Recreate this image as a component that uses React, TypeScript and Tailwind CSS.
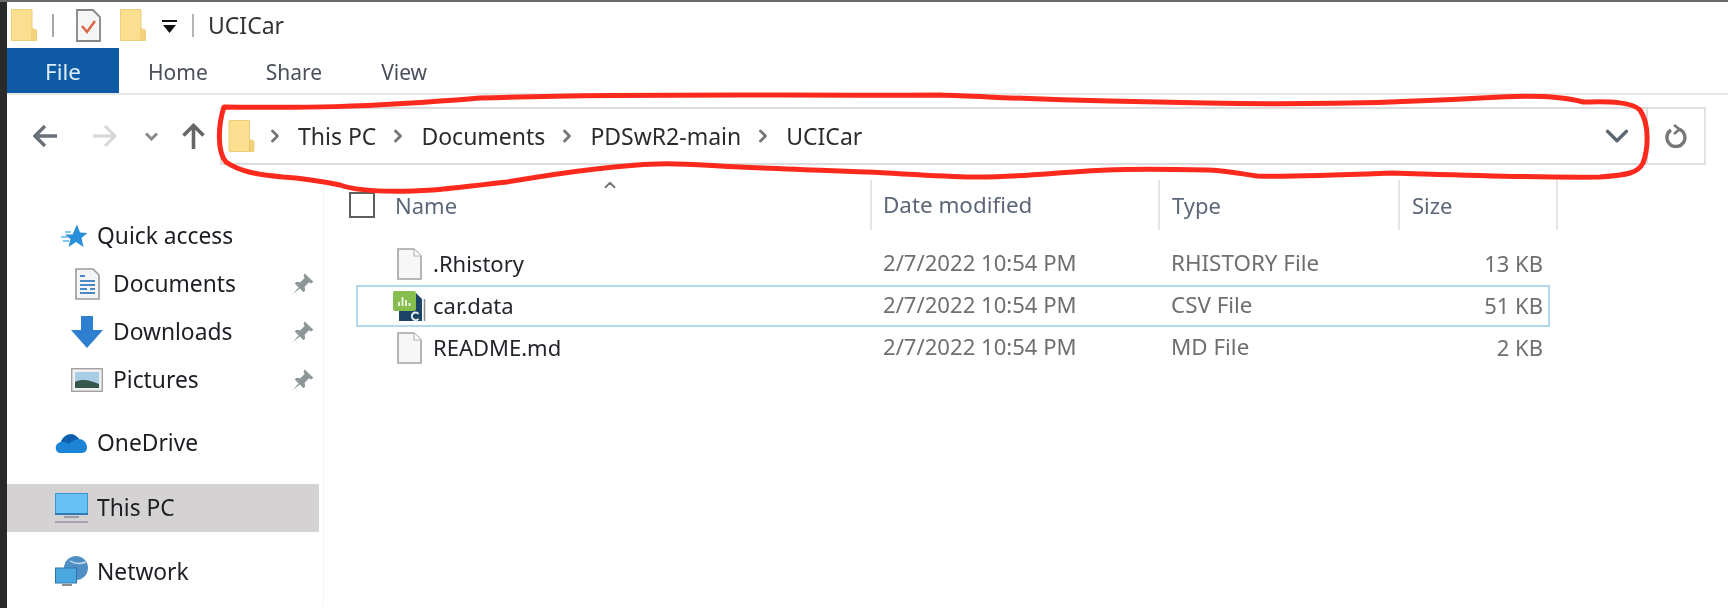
import { ChevronDown, ChevronRight, ChevronUp } from "lucide-react";

const font = "font-['Noto_Sans','Open_Sans',sans-serif]";

function Folder({ className }: { className: string }) {
  return (
    <svg className={className} viewBox="0 0 26 32" fill="none">
      <path d="M0.5 0.5H21V19.5L25.5 21V31.5H0.5Z" fill="#fbdf90" stroke="#ecce78" />
      <path d="M21 19.5V31.5" stroke="#e8c566" strokeWidth="1" />
      <path d="M21.5 20.5L25 22V31H21.5Z" fill="#f4d27a" />
    </svg>
  );
}

function FileIcon() {
  return (
    <svg className="h-[32px] w-[25px] shrink-0" viewBox="0 0 25 32" fill="none">
      <path d="M1 1H17L24 8V31H1Z" fill="#f7f7f7" stroke="#a3a3a3" strokeWidth="1.6" />
      <path d="M17 1V8H24" fill="#fff" stroke="#b5b5b5" strokeWidth="1.2" />
    </svg>
  );
}

function CsvIcon() {
  return (
    <svg className="h-[31px] w-[33px] shrink-0" viewBox="0 0 33 31" fill="none">
      <path d="M31.5 8V30" stroke="#8a8f94" strokeWidth="1.6" />
      <path d="M6 2H23L29 8V30H6Z" fill="#1c4466" />
      <rect x="0" y="0" width="23" height="20" rx="2" fill="#86bd4f" />
      <path d="M6 15V11M9.5 15V6M13 15V9M16.5 15V12" stroke="#e8f3da" strokeWidth="2" />
      <path d="M25.5 22.8A3.8 3.8 0 1 0 25.5 27.8" stroke="#e8eef3" strokeWidth="1.9" />
    </svg>
  );
}

function Pin() {
  return (
    <svg className="h-[22px] w-[22px]" viewBox="0 0 20 20" fill="#8e9698">
      <path d="M11.5 0.5L19.5 8L17.5 9.5L15.5 8.5L11.5 12.5L12 16L10.5 17.5L2.5 9.5L4 8L7.5 8.5L11.5 4.5L10.5 2.5Z" />
      <path d="M6 13L0.5 19.5L7 14.2Z" />
    </svg>
  );
}

function NavRow({ icon, label, pinned, active, indent }: { icon: React.ReactNode; label: string; pinned?: boolean; active?: boolean; indent?: boolean }) {
  return (
    <div className={`flex h-[48px] w-[312px] items-center ${active ? "bg-[#d4d2d3]" : ""} ${indent ? "pl-[64px]" : "pl-[48px]"}`}>
      <div className="flex h-[34px] w-[42px] items-center">{icon}</div>
      <span className="text-[22.8px] leading-none text-[#1d1d24]">{label}</span>
      {pinned && (
        <span className="ml-auto mr-[5px]">
          <Pin />
        </span>
      )}
    </div>
  );
}

const crumbs = ["This PC", "Documents", "PDSwR2-main", "UCICar"];

const files = [
  { name: ".Rhistory", type: "RHISTORY File", size: "13 KB" },
  { name: "car.data", type: "CSV File", size: "51 KB", selected: true },
  { name: "README.md", type: "MD File", size: "2 KB" },
];

export default function App() {
  return (
    <div className={`relative flex h-[608px] w-[1728px] flex-col overflow-hidden bg-white ${font}`}>
      <div className="h-[2px] shrink-0 bg-[#6a6a6a]" />
      <div className="flex min-h-0 flex-1">
        <div className="w-[7px] shrink-0 bg-[#2a2a2a]" />
        <div className="min-w-0 flex-1 blur-[0.5px]">
          {/* Title bar */}
          <div className="flex h-[46px] items-center">
            <Folder className="ml-[4px] h-[32px] w-[26px]" />
            <div className="ml-[15px] h-[23px] w-[2px] bg-[#a8a8a8]" />
            <svg className="ml-[22px] h-[33px] w-[25px]" viewBox="0 0 25 33" fill="none">
              <path d="M1 1H17L24 8V32H1Z" fill="#f6f6f6" stroke="#858585" strokeWidth="1.8" />
              <path d="M6 17L11 23L19 12" stroke="#d9694a" strokeWidth="2.6" />
            </svg>
            <Folder className="ml-[19px] h-[32px] w-[26px]" />
            <svg className="ml-[16px] mt-[4px] h-[14px] w-[15px]" viewBox="0 0 15 14" fill="#111">
              <rect x="0" y="0" width="15" height="2" />
              <path d="M1 5H14L7.5 13Z" />
            </svg>
            <div className="ml-[15px] h-[23px] w-[2px] bg-[#b5b5b5]" />
            <span className="ml-[14px] text-[23px] leading-none text-[#333]">UCICar</span>
          </div>

          {/* Ribbon tabs */}
          <div className="flex h-[47px] items-stretch border-b-2 border-[#e6e6e9]">
            <div className="flex w-[112px] items-center justify-center bg-[#0f5aa5] pt-[2px] text-[22.5px] text-[#dcecf8]">File</div>
            <div className="ml-[29px] flex items-center pt-[4px] text-[21px] text-[#4a4f5c]">Home</div>
            <div className="ml-[58px] flex items-center pt-[4px] text-[21px] text-[#4a4f5c]">Share</div>
            <div className="ml-[59px] flex items-center pt-[4px] text-[21px] text-[#4a4f5c]">View</div>
          </div>

          {/* Address row */}
          <div className="flex h-[85px] pt-[12px]">
            <div className="flex h-[58px] w-[213px] items-center pl-[26px]">
              <svg className="h-[24px] w-[24px]" viewBox="0 0 24 24" fill="none" stroke="#6b7178" strokeWidth="3.4">
                <path d="M24 12H2M12 2L2 12L12 22" />
              </svg>
              <svg className="ml-[36px] h-[24px] w-[24px]" viewBox="0 0 24 24" fill="none" stroke="#d6d6d6" strokeWidth="3">
                <path d="M0 12H22M12 2L22 12L12 22" />
              </svg>
              <svg className="ml-[28px] h-[9px] w-[13px]" viewBox="0 0 13 9" fill="none" stroke="#8b8b8b" strokeWidth="3">
                <path d="M1 1.5L6.5 7L12 1.5" />
              </svg>
              <svg className="ml-[24px] h-[26px] w-[23px]" viewBox="0 0 23 26" fill="none" stroke="#666" strokeWidth="3.6">
                <path d="M11.5 26V3M1.5 12.5L11.5 2.5L21.5 12.5" />
              </svg>
            </div>
            <div className="flex h-[58px] w-[1428px] items-center border-2 border-[#dcdcdc] pl-[6px] pr-[6px]">
              <Folder className="h-[32px] w-[27px]" />
              {crumbs.map((c, i) => (
                <div key={c} className="flex items-center">
                  <ChevronRight className={`${i === 0 ? "ml-[10px]" : "ml-[12px]"} h-[20px] w-[20px] text-[#777]`} strokeWidth={3.4} />
                  <span className="ml-[13px] text-[23px] leading-none text-[#2c2c30]">{c}</span>
                </div>
              ))}
              <ChevronDown className="ml-auto mr-[4px] h-[38px] w-[38px] text-[#5c6670]" strokeWidth={2.1} />
            </div>
            <div className="flex h-[58px] w-[58px] items-center justify-center border-y-2 border-r-2 border-[#e2e2e2]">
              <svg className="h-[24px] w-[22px]" viewBox="0 0 22 24" fill="none" stroke="#777" strokeWidth="3.4">
                <path d="M14.5 5.3A9 9 0 1 1 6 6" />
                <path d="M9 1L14.5 5.3L9 10" strokeWidth="2.6" />
              </svg>
            </div>
          </div>

          <div className="flex">
            {/* Navigation pane */}
            <div className="h-[426px] w-[317px] shrink-0 border-r border-[#f3f3f3] pt-[32px]">
              <NavRow
                label="Quick access"
                icon={
                  <svg className="ml-[5px] h-[24px] w-[28px]" viewBox="0 0 28 24" fill="#2a8fd8">
                    <path d="M17 0.5L20 8.5L27.5 9L21.5 14L23.5 23L16 18L8.5 23L10.5 15L5 10.5H12.5Z" />
                    <path d="M1 13H8M3 17H9M5 8H11" stroke="#5db4ec" strokeWidth="1.4" />
                  </svg>
                }
              />
              <NavRow
                indent
                pinned
                label="Documents"
                icon={
                  <svg className="ml-[4px] h-[32px] w-[25px]" viewBox="0 0 25 32" fill="none">
                    <path d="M1 1H18L24 7V31H1Z" fill="#f3f5f8" stroke="#9a9a9a" strokeWidth="1.6" />
                    <path d="M5 8H10M5 13H20M5 17H20M5 21H12M15 21H20M5 25H20" stroke="#4d8ac4" strokeWidth="1.8" />
                  </svg>
                }
              />
              <NavRow
                indent
                pinned
                label="Downloads"
                icon={
                  <svg className="h-[32px] w-[32px]" viewBox="0 0 32 32" fill="#2f7fd0">
                    <path d="M10 0H22V14H32L16 32L0 14H10Z" />
                  </svg>
                }
              />
              <NavRow
                indent
                pinned
                label="Pictures"
                icon={
                  <svg className="h-[24px] w-[32px]" viewBox="0 0 32 24" fill="none">
                    <rect x="0.7" y="0.7" width="30.6" height="22.6" fill="#f0f0f0" stroke="#a2a2a2" strokeWidth="1.4" />
                    <rect x="4" y="4" width="24" height="16" fill="#a9cde4" />
                    <path d="M4 14C12 10 20 13 28 16V20H4Z" fill="#36574c" />
                  </svg>
                }
              />
              <div className="mt-[15px]">
                <NavRow
                  label="OneDrive"
                  icon={
                    <svg className="h-[22px] w-[33px]" viewBox="0 0 33 22" fill="none">
                      <path d="M6 21C-1 21 -1 11 6 10C8 3 18 -2 24 7C33 7 35 21 27 21Z" fill="#1b84d6" />
                      <path d="M6 10C8 3 18 -2 24 7C19 7 16 10 14 12C11 10 8 10 6 10Z" fill="#0f5fae" />
                    </svg>
                  }
                />
              </div>
              <div className="mt-[17px]">
                <NavRow
                  active
                  label="This PC"
                  icon={
                    <svg className="h-[30px] w-[33px]" viewBox="0 0 33 30" fill="none">
                      <rect x="0.5" y="0.5" width="32" height="20" fill="#68c0f5" stroke="#3e96d0" />
                      <rect x="0" y="20" width="33" height="2" fill="#2f7bb5" />
                      <rect x="9" y="23" width="15" height="2" fill="#9a9fa6" />
                      <rect x="0" y="28" width="33" height="2" fill="#a8a4b4" />
                    </svg>
                  }
                />
              </div>
              <div className="mt-[16px]">
                <NavRow
                  label="Network"
                  icon={
                    <svg className="h-[32px] w-[33px]" viewBox="0 0 33 32" fill="none">
                      <circle cx="21" cy="12" r="12" fill="#4f8fc4" />
                      <path d="M15 5C20 8 26 8 31 6" stroke="#c5dcee" strokeWidth="1.4" />
                      <rect x="0.5" y="12" width="21" height="15" fill="#4aa8e0" stroke="#2e74a8" />
                      <rect x="7" y="28" width="10" height="2" fill="#8c8c8c" />
                    </svg>
                  }
                />
              </div>
            </div>

            {/* File list */}
            <div className="min-w-0 flex-1">
              <div className="flex h-[50px] items-stretch text-[22px] text-[#5b6778]">
                <div className="relative flex w-[546px] items-center pl-[25px]">
                  <div className="h-[26px] w-[26px] border-2 border-[#5e5e5e]" />
                  <span className="ml-[20px]">Name</span>
                  <ChevronUp className="absolute left-[276px] top-[-4px] h-[18px] w-[20px] text-[#777]" strokeWidth={2.5} />
                </div>
                <div className="flex w-[288px] items-center border-l-2 border-[#e5e5e8] pl-[11px]">
                  <span className="text-[22.4px]">Date modified</span>
                </div>
                <div className="flex w-[240px] items-center border-l-2 border-[#e5e5e8] pl-[12px]">
                  <span>Type</span>
                </div>
                <div className="flex w-[160px] items-center border-x-2 border-[#e5e5e8] pl-[12px]">
                  <span>Size</span>
                </div>
              </div>
              <div className="ml-[32px] mt-[13px] w-[1194px]">
                {files.map((f) => (
                  <div key={f.name} className={`flex h-[42px] items-center border-2 text-[22px] ${f.selected ? "border-[#b2d8ec]" : "border-transparent"}`}>
                    <div className="flex w-[525px] items-center">
                      <div className={`flex w-[75px] ${f.selected ? "pl-[35px]" : "pl-[39px]"}`}>{f.selected ? <CsvIcon /> : <FileIcon />}</div>
                      <span className="-mt-[2px] text-[#24242c]">{f.name}</span>
                    </div>
                    <div className="-mt-[2px] w-[288px] text-[22.1px] text-[#6f6f6f]">2/7/2022 10:54 PM</div>
                    <div className="-mt-[2px] w-[300px] text-[22.4px] text-[#6f6f6f]">{f.type}</div>
                    <div className="-mt-[2px] w-[72px] text-right text-[#6f6f6f]">{f.size}</div>
                  </div>
                ))}
              </div>
            </div>
          </div>
        </div>
      </div>

      {/* Hand-drawn annotation */}
      <svg className="pointer-events-none absolute inset-0" width="1728" height="608" viewBox="0 0 1728 608" fill="none">
        <path
          d="M224 107C300 108 360 108 480 98C640 93 780 96 940 95C1000 97 1050 101 1207 103C1300 105 1400 103 1500 97C1540 95 1565 97 1583 102C1600 102 1630 100 1640 110C1650 125 1648 150 1643 163C1638 173 1628 175 1600 177C1540 178 1460 175 1393 173C1340 175 1290 177 1257 176C1230 172 1220 170 1207 170C1160 169 1130 169 1107 170C1060 172 1010 178 973 177C930 176 880 172 840 171C800 170 770 168 740 167C700 165 680 163 657 164C620 165 560 173 507 182C470 186 450 189 433 190C400 192 360 192 340 185C320 181 300 178 283 177C260 175 240 172 226 162C217 152 218 125 224 107Z"
          stroke="#fc2a1c"
          strokeWidth="5"
          strokeLinejoin="round"
        />
      </svg>
    </div>
  );
}
